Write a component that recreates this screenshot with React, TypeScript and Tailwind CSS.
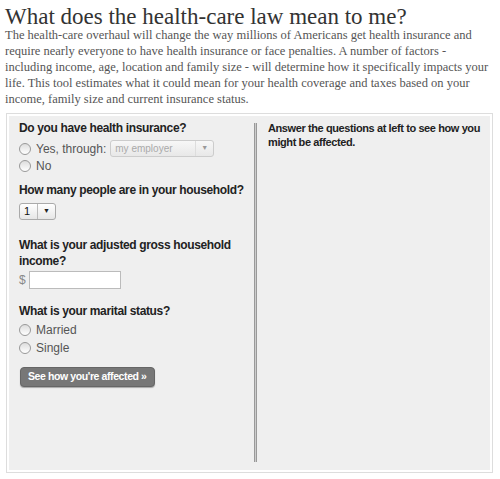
import React from "react";

const Radio = ({ label, children }: { label: string; children?: React.ReactNode }) => (
  <label className="flex items-center h-[17px] text-[12px] text-[#555]">
    <span className="w-[12px] h-[12px] rounded-full border border-[#999] bg-gradient-to-b from-[#ddd] to-white mr-[5px] shrink-0" />
    <span>{label}</span>
    {children}
  </label>
);

const Question = ({ children }: { children: React.ReactNode }) => (
  <h3 className="text-[12px] font-bold text-[#222] leading-[16px] tracking-[-0.35px]">{children}</h3>
);

export default function App() {
  return (
    <div className="w-[500px] h-[479px] bg-white pl-[5px] pt-[6px]" style={{ fontFamily: '"Liberation Sans", Arial, sans-serif' }}>
      <h1 className="text-[23px] leading-[22px] text-[#333]" style={{ fontFamily: '"Liberation Serif", Georgia, serif' }}>
        What does the health-care law mean to me?
      </h1>
      <p className="mt-[-1px] text-[12.5px] leading-[16px] text-[#555] w-[488px]" style={{ fontFamily: '"Liberation Serif", Georgia, serif' }}>
        The health-care overhaul will change the way millions of Americans get health insurance and require nearly everyone to have health insurance or face penalties. A number of factors - including income, age, location and family size - will determine how it specifically impacts your life. This tool estimates what it could mean for your health coverage and taxes based on your income, family size and current insurance status.
      </p>
      <div className="mt-[6px] ml-[1px] w-[487px] h-[360px] border border-[#ddd] p-[2px] bg-white">
        <div className="flex h-full bg-[#efefef]">
          <div className="w-[245px] pl-[10px] pt-[4px] pb-[8px]">
            <Question>Do you have health insurance?</Question>
            <div className="mt-[4px]">
              <Radio label="Yes, through:">
                <span className="ml-[4px] flex items-center w-[104px] h-[17px] border border-[#ccc] rounded-[3px] bg-gradient-to-b from-[#f7f7f7] to-[#e8e8e8] text-[10px] text-[#aaa]">
                  <span className="flex-1 pl-[4px]">my employer</span>
                  <span className="w-[18px] h-full border-l border-[#ddd] flex items-center justify-center text-[7px] text-[#999]">▼</span>
                </span>
              </Radio>
              <Radio label="No" />
            </div>
            <div className="mt-[8px]">
              <Question>How many people are in your household?</Question>
            </div>
            <div className="mt-[5px] flex items-center w-[37px] h-[17px] border border-[#aaa] rounded-[3px] bg-gradient-to-b from-white to-[#e6e6e6] text-[11px] text-[#111]">
              <span className="flex-1 pl-[4px]">1</span>
              <span className="w-[18px] h-full border-l border-[#bbb] flex items-center justify-center text-[7px] text-[#222]">▼</span>
            </div>
            <div className="mt-[17px] w-[230px]">
              <Question>What is your adjusted gross household income?</Question>
            </div>
            <div className="mt-[2px] flex items-center text-[12px] text-[#888]">
              <span className="mr-[3px]">$</span>
              <span className="w-[92px] h-[18px] border border-[#bbb] bg-white" />
            </div>
            <div className="mt-[14px]">
              <Question>What is your marital status?</Question>
            </div>
            <div className="mt-[2px] flex flex-col gap-[1px]">
              <Radio label="Married" />
              <Radio label="Single" />
            </div>
            <button className="mt-[11px] ml-[1px] h-[20px] px-[7px] rounded-[4px] bg-[#777] border border-[#666] text-white text-[10.5px] font-bold tracking-[-0.4px] shadow-[0_1px_1px_rgba(0,0,0,0.3)]">
              See how you're affected »
            </button>
          </div>
          <div className="mt-[7px] mb-[8px] w-[3px] border-l border-r border-[#999] bg-[#ccc]" />
          <div className="flex-1 pl-[11px] pt-[5px] pr-[2px]">
            <p className="text-[11px] font-bold text-[#222] leading-[14px] tracking-[-0.4px]">
              Answer the questions at left to see how you might be affected.
            </p>
          </div>
        </div>
      </div>
    </div>
  );
}
